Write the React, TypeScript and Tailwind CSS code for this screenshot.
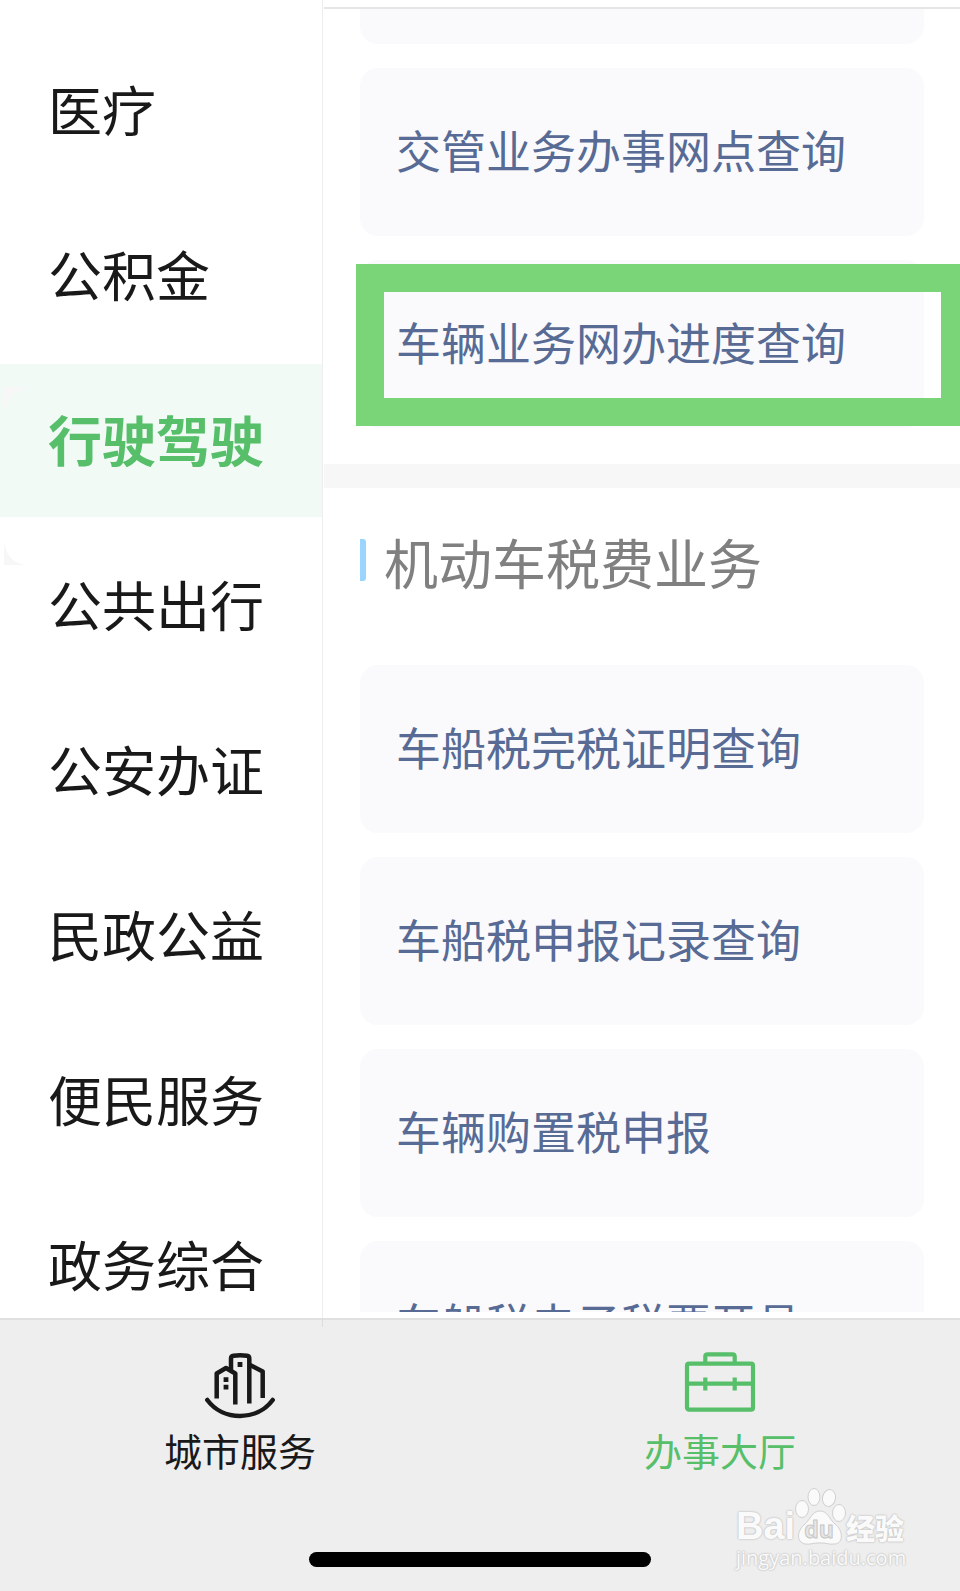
import { useState } from "react";
import clsx from "clsx";

const categories = [
  "医疗",
  "公积金",
  "行驶驾驶",
  "公共出行",
  "公安办证",
  "民政公益",
  "便民服务",
  "政务综合"
];

const trafficServices = [
  { name: "交管业务办事网点查询", highlighted: false },
  { name: "车辆业务网办进度查询", highlighted: true }
];

const taxServices = [
  "车船税完税证明查询",
  "车船税申报记录查询",
  "车辆购置税申报",
  "车船税电子税票开具"
];

type ServiceCardProps = {
  name: string;
  highlighted?: boolean;
};

function ServiceCard({ name, highlighted = false }: ServiceCardProps) {
  return (
    <li className="relative">
      <button
        type="button"
        className="flex h-[168px] w-full items-center rounded-[18px] bg-[#fafafc] px-9 pb-1 text-left text-[45px] leading-[60px] whitespace-nowrap text-[#576b95]"
      >
        {name}
      </button>
      {highlighted ? (
        <span className="pointer-events-none absolute top-1 -right-[45px] bottom-0.5 -left-1 border-[28px] border-[#7ad578]" />
      ) : null}
    </li>
  );
}

function CityIcon() {
  return (
    <svg viewBox="0 0 72 68" className="h-[68px] w-[72px]" fill="none" stroke="currentColor" strokeWidth="4.500">
      <path d="M12.700 47.500V22.500L22 17L31.300 22.500V53.500" strokeLinejoin="round" />
      <path d="M27 19V7.500Q27 5 29.500 4.700Q36 4 43 4.700Q45.300 5 45.300 7.500V52.500" />
      <path d="M46 14L58.700 20.500V47" strokeLinejoin="round" />
      <path d="M3.300 49C19 70.300 53 70.300 68.700 49" strokeLinecap="round" />
      <path d="M19.600 28.700h4.800M19.600 36.200h4.800M33.600 13.500h4.800" strokeWidth="4.800" />
    </svg>
  );
}

function BriefcaseIcon() {
  return (
    <svg viewBox="0 0 72 68" className="h-[68px] w-[72px]" fill="none" stroke="currentColor" strokeWidth="4.200">
      <rect x="3" y="12.700" width="66" height="46" rx="2" />
      <path d="M21.300 12V5.500Q21.300 3.300 23.500 3.300H48.500Q50.700 3.300 50.700 5.500V12" />
      <path d="M3 32.700H69M21.300 26.500v13M50.700 26.500v13" />
    </svg>
  );
}

function Watermark() {
  return (
    <div
      aria-hidden="true"
      className="pointer-events-none absolute right-[52px] bottom-[21px] w-[172px] text-[#fafafa] [text-shadow:0_0_2px_#bdbdbd,0_0_2px_#c4c4c4]"
    >
      <div className="flex items-end">
        <span className="w-[58px] shrink-0 font-['Liberation_Sans',sans-serif] text-[38px] leading-[40px] font-bold">
          Bai
        </span>
        <svg viewBox="0 0 52 58" className="h-[58px] w-[52px] shrink-0" fill="#fafafa" stroke="#d0d0d0">
          <ellipse cx="8" cy="21" rx="6.500" ry="8.500" />
          <ellipse cx="20" cy="9" rx="6" ry="8.500" />
          <ellipse cx="35" cy="10" rx="6.500" ry="8.500" transform="rotate(10 35 10)" />
          <ellipse cx="45" cy="25" rx="6.500" ry="8.500" />
          <path d="M26 23C34 23 35 31 41 36C49 42 50 55 41 56C35 57 32 54.500 26 55C20 54.500 16 57 11 56C2 54 3 43 10 37C17 31 18 23 26 23Z" />
          <text
            x="25"
            y="50"
            textAnchor="middle"
            fill="#e6e6e6"
            stroke="#c6c6c6"
            className="font-['Open_Sans',sans-serif] text-[23px] font-bold [text-shadow:none]"
          >
            du
          </text>
        </svg>
        <span className="font-['Noto_Sans_CJK_SC',sans-serif] text-[29px] leading-[38px] font-black">经验</span>
      </div>
      <p className="font-['Open_Sans',sans-serif] text-[20px] leading-6">jingyan.baidu.com</p>
    </div>
  );
}

export default function App() {
  const [activeCategory, setActiveCategory] = useState("行驶驾驶");
  const [activeTab, setActiveTab] = useState("办事大厅");

  const tabs = [
    { name: "城市服务", icon: <CityIcon /> },
    { name: "办事大厅", icon: <BriefcaseIcon /> }
  ];

  return (
    <div className="flex h-screen flex-col bg-white font-['Noto_Sans_CJK_SC',sans-serif] text-[#191919]">
      <div className="flex min-h-0 flex-1">
        <nav className="relative mr-px w-[323px] shrink-0 overflow-hidden border-r border-[#ededed] pt-[34px]">
          <ul className="flex flex-col gap-3">
            {categories.map((category) => (
              <li key={category}>
                <button
                  type="button"
                  onClick={() => setActiveCategory(category)}
                  className={clsx(
                    "flex h-[153px] w-full items-center pb-1 pl-12 text-[54px] leading-[72px] whitespace-nowrap",
                    category === activeCategory && "bg-[#f2faf6] font-bold text-[#57bf6a]"
                  )}
                >
                  {category}
                </button>
              </li>
            ))}
          </ul>
          <svg
            viewBox="0 0 28 178"
            className="pointer-events-none absolute top-[387px] left-1 h-[178px] w-7"
            fill="#f7f7f7"
          >
            <path d="M0 0H28Q4 2 0 26Z" />
            <path d="M0 156Q4 176 22 178H0Z" />
          </svg>
        </nav>

        <main className="mb-1.5 flex min-w-0 flex-1 flex-col overflow-hidden">
          <div className="h-[9px] shrink-0 border-b-2 border-[#e5e5e5]" />
          <section className="px-9 pb-9">
            <div className="mb-6 h-[35px] rounded-b-[18px] bg-[#fafafc]" />
            <ul className="flex flex-col gap-6">
              {trafficServices.map((service) => (
                <ServiceCard key={service.name} name={service.name} highlighted={service.highlighted} />
              ))}
            </ul>
          </section>
          <div className="h-6 shrink-0 bg-[#f7f7f7]" />
          <section className="px-9 pt-[38px]">
            <div className="flex gap-[18px]">
              <span className="mt-[13px] h-[42px] w-1.5 rounded-r-[3px] bg-[#9ad4ff]" />
              <h2 className="text-[54px] leading-[72px] whitespace-nowrap text-[#808080]">机动车税费业务</h2>
            </div>
            <ul className="mt-[67px] flex flex-col gap-6">
              {taxServices.map((name) => (
                <ServiceCard key={name} name={name} />
              ))}
            </ul>
          </section>
        </main>
      </div>

      <footer className="relative shrink-0 border-t-2 border-[#e0e0e0] bg-[#eeeeee] pb-6">
        <span className="absolute -top-0.5 left-[322px] h-[9px] w-px bg-[#dcdcdc]" />
        <div className="grid grid-cols-2 pt-[31px]">
          {tabs.map((tab) => (
            <button
              key={tab.name}
              type="button"
              onClick={() => setActiveTab(tab.name)}
              className={clsx(
                "flex flex-col items-center gap-1.5 text-[38px] leading-[50px]",
                tab.name === activeTab && "text-[#57bf6a]"
              )}
            >
              {tab.icon}
              {tab.name}
            </button>
          ))}
        </div>
        <div className="mx-auto mt-[77px] h-[15px] w-[342px] rounded-full bg-black" />
        <Watermark />
      </footer>
    </div>
  );
}
